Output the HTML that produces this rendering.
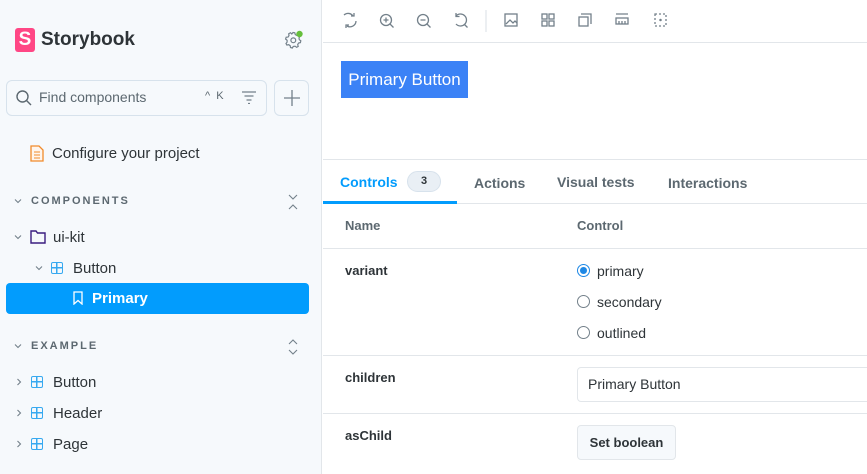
<!DOCTYPE html>
<html><head><style>
*{box-sizing:border-box;margin:0;padding:0}
body{width:867px;height:474px;overflow:hidden;font-family:"Liberation Sans",sans-serif;background:#fff;position:relative;color:#2e3438}
.a{position:absolute}
#side{left:0;top:0;width:322px;height:474px;background:#f6f9fc;border-right:1px solid #e2e6ea}
.t{font-size:14px;color:#2e3438}
.sec{font-size:11px;font-weight:bold;letter-spacing:2px;color:#5c6870}
.grid{width:12px;height:12px;border:1.5px solid #37a9f0;border-radius:2px;background:linear-gradient(#37a9f0,#37a9f0) center/1.5px 100% no-repeat,linear-gradient(#37a9f0,#37a9f0) center/100% 1.5px no-repeat}
.hl{background:#e2e6ea;height:1px}
.lbl{font-size:13px;font-weight:bold;color:#2e3438}
.radio{width:13px;height:13px;border:1px solid #73808a;border-radius:50%}
</style></head><body>
<svg width="0" height="0" style="position:absolute"><defs>
<symbol id="cd" viewBox="0 0 10 10"><path d="M2 3.5l3 3 3-3" fill="none" stroke="#73808a" stroke-width="1.1"/></symbol>
<symbol id="cr" viewBox="0 0 10 10"><path d="M3.5 2l3 3-3 3" fill="none" stroke="#73808a" stroke-width="1.1"/></symbol>
</defs></svg>
<div id="side" class="a">
  <div class="a" style="left:15px;top:28px;width:20px;height:24px;background:#ff4785;border-radius:3px;color:#fff;font-weight:bold;font-size:19px;text-align:center;line-height:24px">S</div>
  <div class="a" style="left:41px;top:29px;font-size:19px;font-weight:bold;color:#2e3438">Storybook</div>
  <svg class="a" style="left:284px;top:30px" width="20" height="20" viewBox="0 0 20 20"><path d="M9 2.5l1.8.3.5 1.8 1.6.9 1.8-.6 1.2 1.4-.9 1.6.3 1.8 1.5 1.1-.4 1.8-1.8.4-.9 1.6.5 1.8-1.6.9-1.5-1.1-1.8.2-1 1.6-1.8-.5-.3-1.8-1.5-1-1.8.4-.9-1.6 1.1-1.4v-1.8L1.6 9l.6-1.8 1.8-.1 1-1.5-.3-1.8L6.5 2.7l1.3 1.3z" fill="none" stroke="#73808a" stroke-width="1.2"/><circle cx="9.3" cy="10.3" r="2.4" fill="none" stroke="#73808a" stroke-width="1.2"/><circle cx="15.5" cy="4" r="3.2" fill="#66bf3c"/></svg>
  <div class="a" style="left:6px;top:80px;width:261px;height:36px;border:1px solid #d7e2ec;border-radius:6px;background:#f6f9fc"></div>
  <svg class="a" style="left:15px;top:89px" width="18" height="18" viewBox="0 0 18 18"><circle cx="7.5" cy="7.5" r="5.5" fill="none" stroke="#5c6870" stroke-width="1.4"/><path d="M11.5 11.5L16 16" stroke="#5c6870" stroke-width="1.4"/></svg>
  <div class="a t" style="left:39px;top:89px;color:#5c6870">Find components</div>
  <div class="a" style="left:205px;top:90px;font-size:11px;color:#5c6870">^&nbsp;&nbsp;K</div>
  <svg class="a" style="left:241px;top:90px" width="16" height="14"><path d="M1 2h14M3.5 6h9M5.5 10h5M7 13.5h2" stroke="#73808a" stroke-width="1.2"/></svg>
  <div class="a" style="left:274px;top:80px;width:35px;height:36px;border:1px solid #d7e2ec;border-radius:6px"></div>
  <svg class="a" style="left:282px;top:88px" width="20" height="20"><path d="M10 2v16M2 10h16" stroke="#73808a" stroke-width="1.3"/></svg>
  <svg class="a" style="left:30px;top:145px" width="14" height="17"><path d="M1 1h8l4 4v11H1z" fill="#fff5ec" stroke="#f18b2b" stroke-width="1.3"/><path d="M4 7h6M4 10h6M4 13h6" stroke="#f18b2b" stroke-width="1.1"/></svg>
  <div class="a t" style="left:52px;top:145px;font-size:15px">Configure your project</div>
  <svg class="a" style="left:13px;top:196px" width="10" height="10"><use href="#cd"/></svg>
  <div class="a sec" style="left:31px;top:195px">COMPONENTS</div>
  <svg class="a" style="left:287px;top:193px" width="12" height="18"><path d="M2 2l4 4 4-4M2 16l4-4 4 4" fill="none" stroke="#73808a" stroke-width="1.1"/></svg>
  <svg class="a" style="left:13px;top:232px" width="10" height="10"><use href="#cd"/></svg>
  <svg class="a" style="left:30px;top:230px" width="16" height="14"><path d="M1 1h5l1.5 2H15v10H1z" fill="none" stroke="#3a1d80" stroke-width="1.4"/></svg>
  <div class="a t" style="left:53px;top:229px;font-size:15px">ui-kit</div>
  <svg class="a" style="left:34px;top:263px" width="10" height="10"><use href="#cd"/></svg>
  <div class="a grid" style="left:51px;top:262px"></div>
  <div class="a t" style="left:73px;top:260px;font-size:15px">Button</div>
  <div class="a" style="left:6px;top:283px;width:303px;height:31px;background:#029cfd;border-radius:4px"></div>
  <svg class="a" style="left:73px;top:291px" width="10" height="14"><path d="M1 1h8v12L5 9.5 1 13z" fill="none" stroke="#fff" stroke-width="1.3"/></svg>
  <div class="a" style="left:92px;top:290px;font-size:15px;font-weight:bold;color:#fff">Primary</div>
  <svg class="a" style="left:13px;top:341px" width="10" height="10"><use href="#cd"/></svg>
  <div class="a sec" style="left:31px;top:340px">EXAMPLE</div>
  <svg class="a" style="left:287px;top:338px" width="12" height="18"><path d="M2 6l4-4 4 4M2 12l4 4 4-4" fill="none" stroke="#73808a" stroke-width="1.1"/></svg>
  <svg class="a" style="left:14px;top:377px" width="10" height="10"><use href="#cr"/></svg>
  <div class="a grid" style="left:31px;top:376px"></div>
  <div class="a t" style="left:53px;top:374px;font-size:15px">Button</div>
  <svg class="a" style="left:14px;top:408px" width="10" height="10"><use href="#cr"/></svg>
  <div class="a grid" style="left:31px;top:407px"></div>
  <div class="a t" style="left:53px;top:405px;font-size:15px">Header</div>
  <svg class="a" style="left:14px;top:439px" width="10" height="10"><use href="#cr"/></svg>
  <div class="a grid" style="left:31px;top:438px"></div>
  <div class="a t" style="left:53px;top:436px;font-size:15px">Page</div>
</div>
<svg class="a" style="left:323px;top:0" width="544" height="42">
 <g fill="none" stroke="#73808a" stroke-width="1.3">
  <path d="M21 15a6 6 0 0 1 9 1M33 21a6 6 0 0 1-9 5M31 13v3h-3M23 28v-3h3"/>
  <circle cx="63" cy="20" r="5.5"/><path d="M67 24l3.5 3.5M60.5 20h5M63 17.5v5"/>
  <circle cx="100" cy="20" r="5.5"/><path d="M104 24l3.5 3.5M97.5 20h5"/>
  <path d="M133 16a6 6 0 1 1 0 8M133 13v3.5h3.5M141 24l3.5 3.5"/>
  <path d="M163 10v22" stroke="#e2e6ea"/>
  <rect x="182" y="14" width="12" height="12"/><path d="M183 24l4-4 3 3 2-2 2 2"/>
  <rect x="219" y="14" width="5" height="5"/><rect x="226" y="14" width="5" height="5"/><rect x="219" y="21" width="5" height="5"/><rect x="226" y="21" width="5" height="5"/>
  <rect x="256" y="17" width="9" height="9"/><path d="M258 14h10v10"/>
  <rect x="293" y="18" width="12" height="6"/><path d="M293 14h12M296 21v3M299 21v3M302 21v3"/>
  <rect x="332" y="14" width="11" height="12" stroke-dasharray="2 2"/><circle cx="337.5" cy="20" r=".6"/>
 </g></svg>
<div class="a hl" style="left:323px;top:42px;width:544px"></div>
<div class="a" style="left:341px;top:61px;width:127px;height:37px;background:#3b82f6;color:#fff;font-size:17px;line-height:37px;text-align:center">Primary Button</div>
<div class="a hl" style="left:323px;top:159px;width:544px"></div>
<div class="a" style="left:340px;top:174px;font-size:14px;font-weight:bold;color:#029cfd">Controls</div>
<div class="a" style="left:407px;top:171px;width:34px;height:21px;border-radius:11px;background:#e9eff5;border:1px solid #d7e2ec;font-size:11px;font-weight:bold;text-align:center;line-height:19px;color:#2e3438">3</div>
<div class="a" style="left:474px;top:175px;font-size:14px;font-weight:bold;color:#5c6870">Actions</div>
<div class="a" style="left:557px;top:174px;font-size:14px;font-weight:bold;color:#5c6870">Visual tests</div>
<div class="a" style="left:668px;top:175px;font-size:14px;font-weight:bold;color:#5c6870">Interactions</div>
<div class="a hl" style="left:323px;top:203px;width:544px"></div>
<div class="a" style="left:323px;top:201px;width:134px;height:3px;background:#029cfd"></div>
<div class="a lbl" style="left:345px;top:218px;color:#5c6870">Name</div>
<div class="a lbl" style="left:577px;top:218px;color:#5c6870">Control</div>
<div class="a hl" style="left:323px;top:248px;width:544px"></div>
<div class="a lbl" style="left:345px;top:263px">variant</div>
<div class="a radio" style="left:577px;top:264px;border:1.5px solid #1e88e5;background:radial-gradient(#1e88e5 3.2px,#fff 3.8px)"></div>
<div class="a t" style="left:597px;top:263px">primary</div>
<div class="a radio" style="left:577px;top:295px"></div>
<div class="a t" style="left:597px;top:294px">secondary</div>
<div class="a radio" style="left:577px;top:326px"></div>
<div class="a t" style="left:597px;top:325px">outlined</div>
<div class="a hl" style="left:323px;top:355px;width:544px"></div>
<div class="a lbl" style="left:345px;top:370px">children</div>
<div class="a" style="left:577px;top:367px;width:300px;height:35px;border:1px solid #e2e6ea;border-radius:4px"></div>
<div class="a t" style="left:588px;top:376px;font-size:14px">Primary Button</div>
<div class="a hl" style="left:323px;top:413px;width:544px"></div>
<div class="a lbl" style="left:345px;top:428px">asChild</div>
<div class="a" style="left:577px;top:425px;width:99px;height:35px;border:1px solid #e2e6ea;border-radius:4px;background:#f6f9fc;font-size:13px;font-weight:bold;text-align:center;line-height:33px">Set boolean</div>
</body></html>
